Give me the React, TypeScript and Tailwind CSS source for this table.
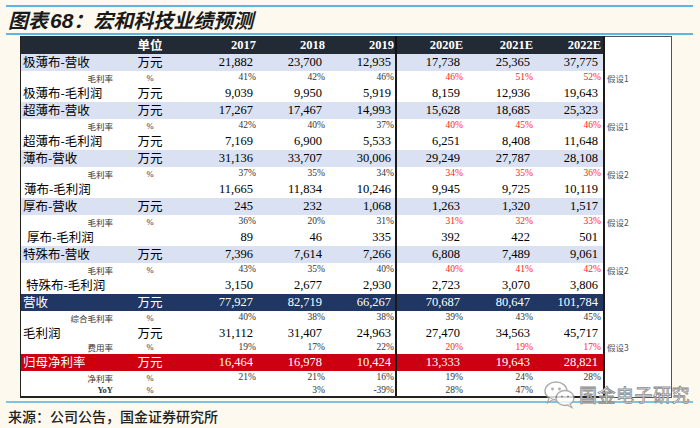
import React from 'react';

type Tone = 'blue' | 'white' | 'navy' | 'red';

interface Row {
  kind: 'main' | 'sub';
  label: string;
  unit: string;
  vals: string[];
  tone: Tone;
  h: string;
  redForecast?: boolean;
  note?: string;
  indent?: string;
}

const cjk = "font-['Noto_Sans_CJK_SC',sans-serif]";
const serif = "font-['Liberation_Serif','Noto_Sans_CJK_SC',serif]";

const rows: Row[] = [
  { kind: 'main', label: '极薄布-营收', unit: '万元', vals: ['21,882', '23,700', '12,935', '17,738', '25,365', '37,775'], tone: 'blue', h: 'h-[17px]' },
  { kind: 'sub', label: '毛利率', unit: '%', vals: ['41%', '42%', '46%', '46%', '51%', '52%'], tone: 'white', h: 'h-[14px]', redForecast: true, note: '假设1' },
  { kind: 'main', label: '极薄布-毛利润', unit: '万元', vals: ['9,039', '9,950', '5,919', '8,159', '12,936', '19,643'], tone: 'white', h: 'h-[17px]' },
  { kind: 'main', label: '超薄布-营收', unit: '万元', vals: ['17,267', '17,467', '14,993', '15,628', '18,685', '25,323'], tone: 'blue', h: 'h-[17px]' },
  { kind: 'sub', label: '毛利率', unit: '%', vals: ['42%', '40%', '37%', '40%', '45%', '46%'], tone: 'white', h: 'h-[14px]', redForecast: true, note: '假设1' },
  { kind: 'main', label: '超薄布-毛利润', unit: '万元', vals: ['7,169', '6,900', '5,533', '6,251', '8,408', '11,648'], tone: 'white', h: 'h-[17px]' },
  { kind: 'main', label: '薄布-营收', unit: '万元', vals: ['31,136', '33,707', '30,006', '29,249', '27,787', '28,108'], tone: 'blue', h: 'h-[17px]' },
  { kind: 'sub', label: '毛利率', unit: '%', vals: ['37%', '35%', '34%', '34%', '35%', '36%'], tone: 'white', h: 'h-[14px]', redForecast: true, note: '假设2' },
  { kind: 'main', label: '薄布-毛利润', unit: '', vals: ['11,665', '11,834', '10,246', '9,945', '9,725', '10,119'], tone: 'white', h: 'h-[17px]', indent: 'pl-[3px]' },
  { kind: 'main', label: '厚布-营收', unit: '万元', vals: ['245', '232', '1,068', '1,263', '1,320', '1,517'], tone: 'blue', h: 'h-[17px]' },
  { kind: 'sub', label: '毛利率', unit: '%', vals: ['36%', '20%', '31%', '31%', '32%', '33%'], tone: 'white', h: 'h-[14px]', redForecast: true, note: '假设2' },
  { kind: 'main', label: '厚布-毛利润', unit: '', vals: ['89', '46', '335', '392', '422', '501'], tone: 'white', h: 'h-[17px]', indent: 'pl-[6px]' },
  { kind: 'main', label: '特殊布-营收', unit: '万元', vals: ['7,396', '7,614', '7,266', '6,808', '7,489', '9,061'], tone: 'blue', h: 'h-[17px]' },
  { kind: 'sub', label: '毛利率', unit: '%', vals: ['43%', '35%', '40%', '40%', '41%', '42%'], tone: 'white', h: 'h-[14px]', redForecast: true, note: '假设2' },
  { kind: 'main', label: '特殊布-毛利润', unit: '', vals: ['3,150', '2,677', '2,930', '2,723', '3,070', '3,806'], tone: 'white', h: 'h-[17px]', indent: 'pl-[5px]' },
  { kind: 'main', label: '营收', unit: '万元', vals: ['77,927', '82,719', '66,267', '70,687', '80,647', '101,784'], tone: 'navy', h: 'h-[17px]' },
  { kind: 'sub', label: '综合毛利率', unit: '%', vals: ['40%', '38%', '38%', '39%', '43%', '45%'], tone: 'white', h: 'h-[14px]' },
  { kind: 'main', label: '毛利润', unit: '万元', vals: ['31,112', '31,407', '24,963', '27,470', '34,563', '45,717'], tone: 'white', h: 'h-[16px]' },
  { kind: 'sub', label: '费用率', unit: '%', vals: ['19%', '17%', '22%', '20%', '19%', '17%'], tone: 'white', h: 'h-[13px]', redForecast: true, note: '假设3' },
  { kind: 'main', label: '归母净利率', unit: '万元', vals: ['16,464', '16,978', '10,424', '13,333', '19,643', '28,821'], tone: 'red', h: 'h-[17px]' },
  { kind: 'sub', label: '净利率', unit: '%', vals: ['21%', '21%', '16%', '19%', '24%', '28%'], tone: 'white', h: 'h-[14px]' },
  { kind: 'sub', label: 'YoY', unit: '%', vals: ['', '3%', '-39%', '28%', '47%', ''], tone: 'white', h: 'h-[13px]' },
];

const toneBg: Record<Tone, string> = {
  blue: 'bg-[#d9e1f2]',
  white: 'bg-white',
  navy: 'bg-[#203764]',
  red: 'bg-[#cc0010]',
};

// year column widths, 2017..2019 then 2020E..2022E
const leftCols = ['w-[77px]', 'w-[69px]', 'w-[69px]'];
const rightCols = ['w-[67px]', 'w-[70px]', 'w-[68px]'];

const ValueCell = ({ row, value, width, forecast }: { row: Row; value: string; width: string; forecast: boolean }) => {
  if (row.kind === 'sub') {
    const color = forecast && row.redForecast ? 'text-[#ff2020]' : 'text-[#333]';
    return (
      <div className={`${width} shrink-0 text-right pr-[1px] text-[9.5px] leading-none ${serif} ${color}`}>{value}</div>
    );
  }
  const color = row.tone === 'navy' || row.tone === 'red' ? 'text-white' : 'text-black';
  return (
    <div className={`${width} shrink-0 text-right pr-[4px] text-[12.5px] leading-none ${serif} ${color}`}>{value}</div>
  );
};

const TableRow = ({ row, last }: { row: Row; last: boolean }) => {
  const light = row.tone === 'navy' || row.tone === 'red';
  const bottom = last ? 'border-b-[2px] border-[#222]' : '';
  return (
    <div className={`flex ${row.h}`}>
      <div className={`flex flex-1 items-center border-l-[1.5px] border-[#222] ${toneBg[row.tone]} ${bottom}`}>
        {row.kind === 'main' ? (
          <div className={`w-[99px] shrink-0 pl-[2px] ${row.indent ?? ''} text-[12.5px] leading-none whitespace-nowrap ${cjk} ${light ? 'text-white' : 'text-black'}`}>
            {row.label}
          </div>
        ) : (
          <div className={`w-[99px] shrink-0 pr-[7px] text-right text-[8.5px] leading-none ${row.label === 'YoY' ? serif + ' font-bold' : cjk} text-[#333]`}>
            {row.label}
          </div>
        )}
        <div
          className={`w-[60px] shrink-0 text-center leading-none ${
            row.kind === 'main' ? `text-[12.5px] ${cjk}` : `text-[8.5px] ${serif}`
          } ${light ? 'text-white' : row.kind === 'main' ? 'text-black' : 'text-[#333]'}`}
        >
          {row.unit}
        </div>
        {row.vals.slice(0, 3).map((v, i) => (
          <ValueCell key={i} row={row} value={v} width={leftCols[i]} forecast={false} />
        ))}
        <div className="w-[2px] self-stretch shrink-0 bg-[#1a1a1a]" />
        {row.vals.slice(3).map((v, i) => (
          <ValueCell key={i} row={row} value={v} width={rightCols[i]} forecast />
        ))}
      </div>
      <div className="w-[2px] shrink-0 bg-[#1a1a1a]" />
      <div
        className={`w-[67px] shrink-0 flex items-center pl-[2px] bg-white border-r border-[#555] text-[8.5px] text-[#555] leading-none ${cjk} ${
          last ? 'border-b border-b-[#555]' : ''
        }`}
      >
        {row.note}
      </div>
    </div>
  );
};

const HeaderRow = () => (
  <div className="flex h-[18px]">
    <div className={`flex flex-1 items-center bg-[#222b35] border-l-[1.5px] border-[#222] text-white font-bold leading-none`}>
      <div className="w-[99px] shrink-0" />
      <div className={`w-[60px] shrink-0 text-center text-[12.5px] ${cjk}`}>单位</div>
      {['2017', '2018', '2019'].map((y, i) => (
        <div key={y} className={`${leftCols[i]} shrink-0 text-right pr-[1px] text-[12.5px] ${serif}`}>{y}</div>
      ))}
      <div className="w-[2px] self-stretch shrink-0 bg-[#111]" />
      {['2020E', '2021E', '2022E'].map((y, i) => (
        <div key={y} className={`${rightCols[i]} shrink-0 text-right pr-[1px] text-[12.5px] ${serif}`}>{y}</div>
      ))}
    </div>
    <div className="w-[2px] shrink-0 bg-[#1a1a1a]" />
    <div className="w-[67px] shrink-0 bg-white border-t border-r border-[#555]" />
  </div>
);

const WeChatMark = () => (
  <svg width="34" height="30" viewBox="0 0 34 30" className="opacity-80">
    <ellipse cx="13" cy="12" rx="11" ry="9" fill="#ffffff" stroke="#9a9a9a" strokeWidth="1.4" />
    <path d="M6 19 L4.5 24 L10 20.5" fill="#ffffff" stroke="#9a9a9a" strokeWidth="1.2" />
    <circle cx="9.5" cy="10" r="1.4" fill="#9a9a9a" />
    <circle cx="16.5" cy="10" r="1.4" fill="#9a9a9a" />
    <ellipse cx="22" cy="19" rx="9" ry="7.5" fill="#ffffff" stroke="#9a9a9a" strokeWidth="1.4" />
    <path d="M27 25 L29 28.5 L24 26" fill="#ffffff" stroke="#9a9a9a" strokeWidth="1.2" />
    <circle cx="19" cy="17.5" r="1.1" fill="#9a9a9a" />
    <circle cx="25" cy="17.5" r="1.1" fill="#9a9a9a" />
  </svg>
);

export default function App() {
  return (
    <div className="relative w-[700px] h-[428px] overflow-hidden bg-[#fdf9ee]">
      <div className="pt-[5px]">
        <div className="ml-[6px] w-[687px] h-[2px] bg-[#5cb5e3]" />
        <div className={`h-[26px] pl-[8px] flex items-center text-[20px] font-bold italic text-[#1a1a1a] leading-none ${cjk}`}>
          图表<span className="font-['Liberation_Sans',sans-serif] text-[21px] pl-[2px]">68</span>：宏和科技业绩预测
        </div>
        <div className="ml-[6px] w-[687px] h-[2px] bg-[#5cb5e3]" />
        <div className="ml-[20px] w-[652px] mt-[1px]">
          <HeaderRow />
          {rows.map((r, i) => (
            <TableRow key={i} row={r} last={i === rows.length - 1} />
          ))}
        </div>
        <div className="ml-[6px] w-[687px] h-[2px] mt-[3px] bg-[#7cc4e6]" />
        <div className={`pl-[8px] pt-[4px] text-[14px] leading-[18px] font-medium text-[#222] ${cjk}`}>
          来源：公司公告，国金证券研究所
        </div>
      </div>
      <div className="absolute left-[543px] top-[379px] flex items-center gap-[2px]">
        <WeChatMark />
        <span
          className={`text-[18px] leading-none text-white tracking-[0.5px] ${cjk}`}
          style={{ WebkitTextStroke: '0.8px #8a8a8a' }}
        >
          国金电子研究
        </span>
      </div>
    </div>
  );
}
